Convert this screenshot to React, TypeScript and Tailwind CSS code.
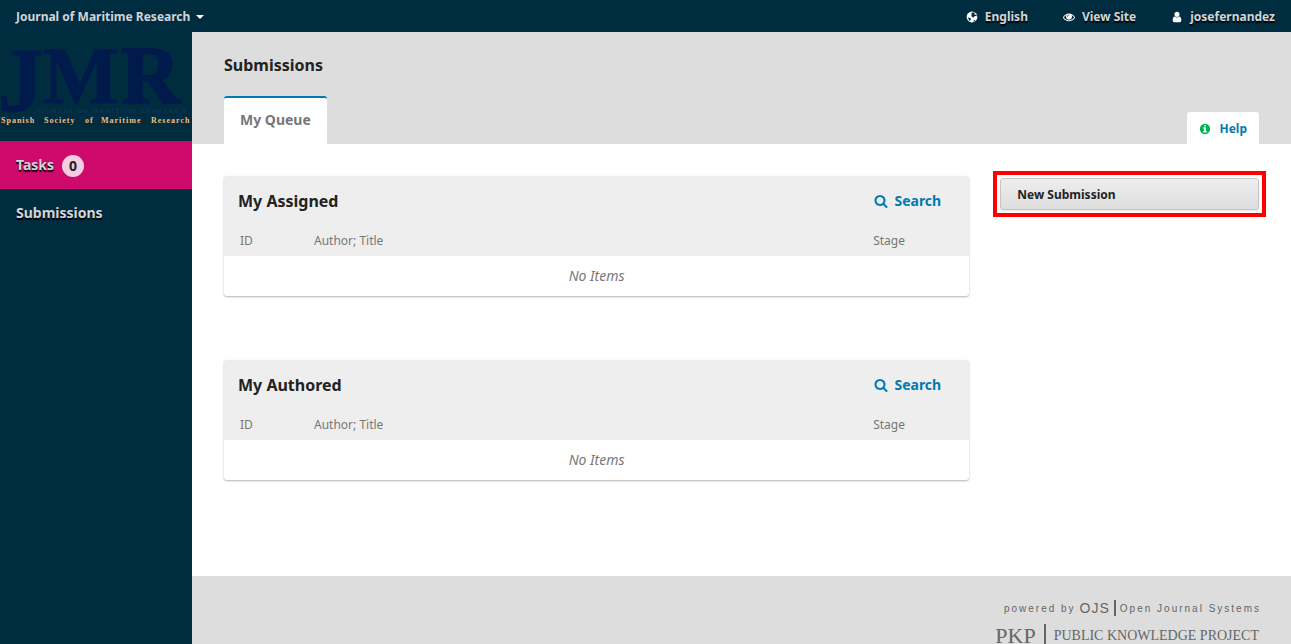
const icons = {
  search:
    "M1216 832q0-185-131.5-316.5t-316.5-131.5-316.5 131.5-131.5 316.5 131.5 316.5 316.5 131.5 316.5-131.5 131.5-316.5zm512 832q0 52-38 90t-90 38q-54 0-90-38l-343-342q-179 124-399 124-143 0-273.5-55.5t-225-150-150-225-55.5-273.5 55.5-273.5 150-225 225-150 273.5-55.5 273.5 55.5 225 150 150 225 55.5 273.5q0 220-124 399l343 343q37 37 37 90z",
  user: "M1536 1399q0 109-62.5 187t-150.5 78h-854q-88 0-150.5-78t-62.5-187q0-85 8.5-160.5t31.5-152 58.5-131 94-89 134.5-34.5q131 128 313 128t313-128q76 0 134.5 34.5t94 89 58.5 131 31.5 152 8.5 160.5zm-256-887q0 159-112.5 271.5t-271.5 112.5-271.5-112.5-112.5-271.5 112.5-271.5 271.5-112.5 271.5 112.5 112.5 271.5z",
  eye: "M1664 960q-152-236-381-353 61 104 61 225 0 185-131.5 316.5t-316.5 131.5-316.5-131.5-131.5-316.5q0-121 61-225-229 117-381 353 133 205 333.5 326.5t434.5 121.5 434.5-121.5 333.5-326.5zm-720-384q0-20-14-34t-34-14q-125 0-214.5 89.5t-89.5 214.5q0 20 14 34t34 14 34-14 14-34q0-86 61-147t147-61q20 0 34-14t14-34zm848 384q0 34-20 69-140 230-376.5 368.5t-499.5 138.5-499.5-139-376.5-368q-20-35-20-69t20-69q140-229 376.5-368t499.5-139 499.5 139 376.5 368q20 35 20 69z",
  info: "M1152 1376v-160q0-14-9-23t-23-9h-96v-512q0-14-9-23t-23-9h-320q-14 0-23 9t-9 23v160q0 14 9 23t23 9h96v320h-96q-14 0-23 9t-9 23v160q0 14 9 23t23 9h448q14 0 23-9t9-23zm-128-896v-160q0-14-9-23t-23-9h-192q-14 0-23 9t-9 23v160q0 14 9 23t23 9h192q14 0 23-9t9-23zm640 416q0 209-103 385.5t-279.5 279.5-385.5 103-385.5-103-279.5-279.5-103-385.5 103-385.5 279.5-279.5 385.5-103 385.5 103 279.5 279.5 103 385.5z",
};

function Icon({ name, className }: { name: keyof typeof icons; className: string }) {
  return (
    <svg viewBox="0 0 1792 1792" fill="currentColor" aria-hidden="true" className={className}>
      <path d={icons[name]} />
    </svg>
  );
}

function GlobeIcon() {
  return (
    <svg viewBox="0 0 14 14" aria-hidden="true" className="size-[14px]">
      <circle cx="7" cy="7" r="5.4" fill="#fff" />
      <path d="M6.6 2.9l1.8-.6 1.4.9-.6 1 1 .5 1.3.2.3 1.3-1.5-.3-1.3.7-.9 1.4-.9-1.2-1.1-.9.9-1.2-.8-.7z" fill="#002c40" />
      <path d="M2.9 7.2l1.2.6 1.5.5.5.8-.8.9-.2 1.1-1.1-.8-.5-1.3z" fill="#002c40" />
      <path d="M8.8 10.2l1.7-.5-.9 1.5-1.2.5z" fill="#002c40" />
    </svg>
  );
}

function TopBar() {
  return (
    <header className="flex h-8 shrink-0 items-center justify-between bg-[#002c40] px-4 pt-0.5 text-xs font-bold text-[#d0d5d8] [text-shadow:0_2px_1px_#000]">
      <button type="button" className="flex items-center gap-1.5">
        Journal of Maritime Research
        <svg viewBox="0 0 8 4" fill="#fff" aria-hidden="true" className="h-1 w-2">
          <path d="M0 0h8L4 4z" />
        </svg>
      </button>
      <nav className="flex items-center gap-[34px]">
        <a href="#language" className="flex items-center gap-1.5">
          <GlobeIcon />
          English
        </a>
        <a href="#site" className="flex items-center gap-1.5">
          <span className="flex w-[14px] justify-center">
            <Icon name="eye" className="size-3 text-white" />
          </span>
          View Site
        </a>
        <a href="#profile" className="flex items-center gap-1.5">
          <span className="flex w-[14px] justify-center">
            <Icon name="user" className="size-3 text-white" />
          </span>
          josefernandez
        </a>
      </nav>
    </header>
  );
}

function Logo() {
  return (
    <svg viewBox="0 0 192 109" className="h-[109px] w-48 [text-shadow:none]" role="img" aria-label="JMR">
      <g fontFamily="Liberation Serif, serif" fontWeight="700" fill="#001a4b">
        <text x="-2" y="79" fontSize="92" stroke="#001a4b">J</text>
        <text x="43" y="71" fontSize="80" stroke="#001a4b">M</text>
        <text x="121" y="71" fontSize="82" stroke="#001a4b" strokeWidth="2">R</text>
        <text x="34" y="81" fontSize="7" letterSpacing="1" fill="#16305a">JOURNAL OF MARITIME RESEARCH</text>
        <text y="91" fontSize="8" letterSpacing="1" fill="#f0bd7c">
          <tspan x="1">Spanish </tspan>
          <tspan x="44">Society </tspan>
          <tspan x="85">of </tspan>
          <tspan x="101">Maritime </tspan>
          <tspan x="151">Research</tspan>
        </text>
      </g>
    </svg>
  );
}

function Sidebar() {
  return (
    <aside className="w-48 shrink-0 bg-[#002c40] text-sm font-bold text-[#d0d5d8] [text-shadow:0_2px_1px_#000]">
      <a href="#home" className="block">
        <Logo />
      </a>
      <nav>
        <a href="#tasks" className="flex h-12 items-center gap-2 bg-[#d00a6c] px-4">
          Tasks
          <span className="mt-0.5 flex size-[22px] items-center justify-center rounded-full bg-[#f5cee2] text-[#222] [text-shadow:none]">
            0
          </span>
        </a>
        <a href="#submissions" className="flex h-12 items-center px-4">
          Submissions
        </a>
      </nav>
    </aside>
  );
}

function SubmissionList({ title }: { title: string }) {
  return (
    <section className="mb-16 overflow-hidden rounded-[3px] bg-white shadow-[0_1px_2px_rgba(0,0,0,0.3)]">
      <div className="flex h-[50px] items-center justify-between bg-[#eee] pr-7 pl-[14px]">
        <h2 className="text-base font-bold">{title}</h2>
        <button type="button" className="flex items-center gap-1.5 text-sm font-bold text-[#007ab2]">
          <Icon name="search" className="size-[14px]" />
          Search
        </button>
      </div>
      <table className="w-full table-fixed" aria-label={title}>
        <thead>
          <tr className="h-[30px] bg-[#eee] text-left text-xs text-[#777]">
            <th className="w-[90px] pl-4 font-normal">ID</th>
            <th className="font-normal">Author; Title</th>
            <th className="w-24 font-normal">Stage</th>
          </tr>
        </thead>
        <tbody>
          <tr className="h-10">
            <td colSpan={3} className="text-center text-sm text-[#777] italic">
              No Items
            </td>
          </tr>
        </tbody>
      </table>
    </section>
  );
}

function Footer() {
  return (
    <footer className="flex grow flex-col items-end bg-[#ddd] px-8 pt-6 text-[#666]">
      <div className="flex h-4 items-center gap-1 font-['Liberation_Sans',sans-serif] text-[10px] tracking-[2px]">
        <span>powered by</span>
        <span className="text-sm tracking-[1px]">OJS</span>
        <span className="h-4 w-0.5 bg-[#666]" />
        <span className="-mr-0.5">Open Journal Systems</span>
      </div>
      <div className="mt-2 flex h-6 items-center gap-2 font-['Liberation_Serif',serif] whitespace-nowrap">
        <span className="text-[22px] leading-6">PKP</span>
        <span className="h-6 w-0.5 bg-[#666]" />
        <span className="text-sm">PUBLIC KNOWLEDGE PROJECT</span>
      </div>
    </footer>
  );
}

export default function App() {
  return (
    <div className="flex h-screen flex-col overflow-hidden bg-white font-['Noto_Sans',sans-serif] text-[#222]">
      <TopBar />
      <div className="flex min-h-0 grow">
        <Sidebar />
        <div className="flex min-w-0 grow flex-col">
          <div className="shrink-0 bg-[#ddd] px-8">
            <h1 className="flex h-16 items-center pt-0.5 text-base font-bold">Submissions</h1>
            <div className="flex items-end justify-between">
              <button
                type="button"
                className="h-12 rounded-t-[3px] border-t-2 border-[#007ab2] bg-white px-4 pb-0.5 text-sm font-bold text-[#777]"
              >
                My Queue
              </button>
              <a
                href="#help"
                className="flex h-8 items-center gap-2 rounded-t-[3px] bg-white px-3 pt-0.5 text-xs font-bold text-[#007ab2]"
              >
                <Icon name="info" className="size-3 text-[#00b24e]" />
                Help
              </a>
            </div>
          </div>
          <main className="flex shrink-0 items-start justify-between px-8 py-8">
            <div className="w-[72%]">
              <SubmissionList title="My Assigned" />
              <SubmissionList title="My Authored" />
            </div>
            <div className="-mx-[7px] -mt-[5px] -mb-[7px] w-[calc(25%+14px)] border-4 border-[#f00] p-[3px]">
              <button
                type="button"
                className="h-8 w-full rounded-[3px] border border-[#c4c4c4] bg-linear-to-b from-[#eee] to-[#ddd] px-4 pt-0.5 text-left text-xs font-bold shadow-[0_1px_2px_rgba(0,0,0,0.1)]"
              >
                New Submission
              </button>
            </div>
          </main>
          <Footer />
        </div>
      </div>
    </div>
  );
}
